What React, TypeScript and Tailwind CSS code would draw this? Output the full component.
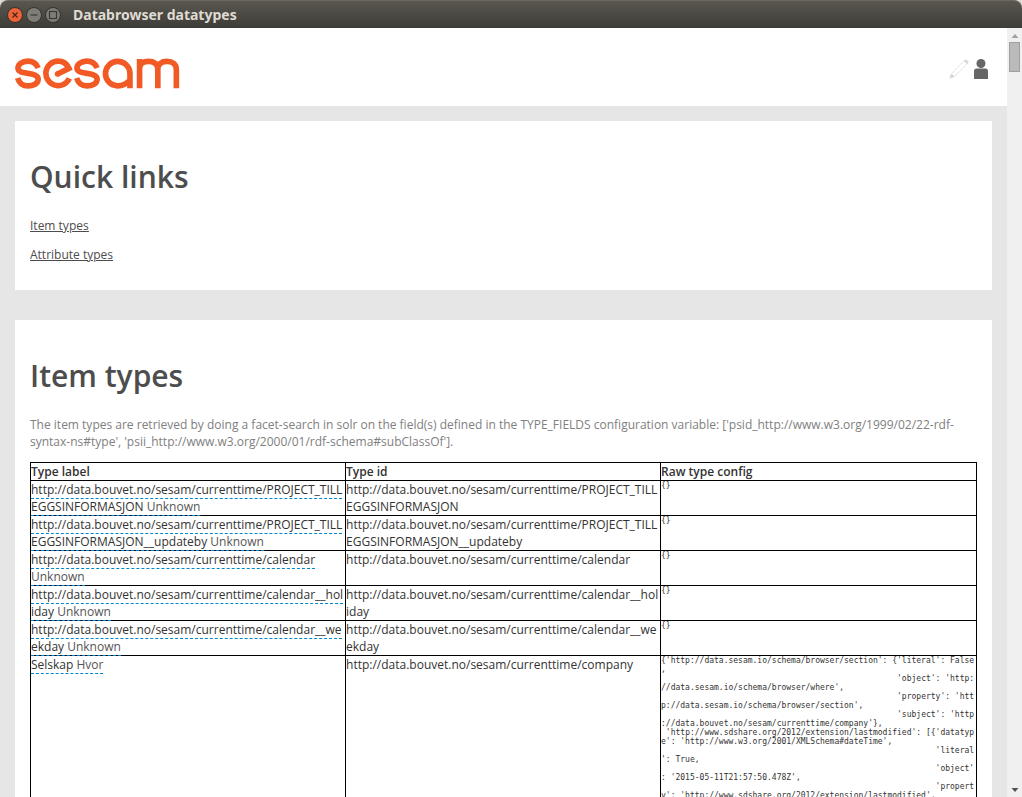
import React from "react";

type ItemType = { label: string; section: string; id: string; raw: string };

const base = "http://data.bouvet.no/sesam/currenttime/";

const pad = (n: number) => " ".repeat(n);

const companyConfig = [
  "{'http://data.sesam.io/schema/browser/section': {'literal': False,",
  pad(49) + "'object': 'http://data.sesam.io/schema/browser/where',",
  pad(49) + "'property': 'http://data.sesam.io/schema/browser/section',",
  pad(49) + "'subject': 'http://data.bouvet.no/sesam/currenttime/company'},",
  " 'http://www.sdshare.org/2012/extension/lastmodified': [{'datatype': 'http://www.w3.org/2001/XMLSchema#dateTime',",
  pad(57) + "'literal': True,",
  pad(57) + "'object': '2015-05-11T21:57:50.478Z',",
  pad(57) + "'property': 'http://www.sdshare.org/2012/extension/lastmodified',",
].join("\n");

const itemTypes: ItemType[] = [
  { label: base + "PROJECT_TILLEGGSINFORMASJON", section: "Unknown", id: base + "PROJECT_TILLEGGSINFORMASJON", raw: "{}" },
  { label: base + "PROJECT_TILLEGGSINFORMASJON__updateby", section: "Unknown", id: base + "PROJECT_TILLEGGSINFORMASJON__updateby", raw: "{}" },
  { label: base + "calendar", section: "Unknown", id: base + "calendar", raw: "{}" },
  { label: base + "calendar__holiday", section: "Unknown", id: base + "calendar__holiday", raw: "{}" },
  { label: base + "calendar__weekday", section: "Unknown", id: base + "calendar__weekday", raw: "{}" },
  { label: "Selskap", section: "Hvor", id: base + "company", raw: companyConfig },
];

function TitleBar() {
  return (
    <div className="bg-[#dfdbd2]">
      <div className="flex h-7 items-center gap-[3px] rounded-t-lg border-t border-[#6b6860] bg-linear-to-b from-[#59574f] to-[#3d3c37] pl-[7px]">
        <button aria-label="Close" className="size-4">
          <svg viewBox="0 0 16 16" className="size-4">
            <circle cx="8" cy="8" r="7.5" fill="#ec6239" stroke="#33322d" />
            <path d="M5.5 5.5l5 5m0-5l-5 5" stroke="#4a2416" strokeWidth="1.2" />
          </svg>
        </button>
        <button aria-label="Minimize" className="size-4">
          <svg viewBox="0 0 16 16" className="size-4">
            <circle cx="8" cy="8" r="7.5" fill="#7f7d75" stroke="#33322d" />
            <path d="M4.5 8h7" stroke="#3a3934" strokeWidth="1.2" />
          </svg>
        </button>
        <button aria-label="Maximize" className="size-4">
          <svg viewBox="0 0 16 16" className="size-4">
            <circle cx="8" cy="8" r="7.5" fill="#7f7d75" stroke="#33322d" />
            <rect x="4.5" y="4.500" width="7" height="7" fill="none" stroke="#3a3934" strokeWidth="1.2" />
          </svg>
        </button>
        <span className="pl-[9px] font-['Noto_Sans',sans-serif] text-sm font-bold text-[#dfdbd2]">Databrowser datatypes</span>
      </div>
    </div>
  );
}

function Logo() {
  const s = "M115 203C109 188 97 182 84 182C66 182 54 192 54 203C54 215 68 217 84 219C102 222 115 225 115 237C115 250 100 257 84 257C69 257 58 249 53 233";
  return (
    <svg role="img" aria-label="sesam" viewBox="45 173 498 93" className="h-[31px] w-[165px]" fill="none" stroke="#f15a24" strokeWidth="17">
      <path d={s} />
      <circle cx="173" cy="221" r="8" fill="#f15a24" stroke="none" />
      <path d="M172 222L208 204C202 190 189 182 175 182A37 37 0 1 0 209 234" />
      <path d={s} transform="translate(178 0)" />
      <path d="M392 264V219A37 37 0 1 0 355 257C368 257 380 253 388 242" />
      <path d="M421 264V176M421 205C421 190 432 183 448 183C464 183 476 190 476 206V264M476 206C476 190 488 183 504 183C520 183 532 191 532 208V264" />
    </svg>
  );
}

function Header() {
  return (
    <header className="flex h-[78px] items-center justify-between bg-white pr-[19px] pl-[15px]">
      <a href="#top" className="pt-3"><Logo /></a>
      <div className="flex items-center gap-[5px] pt-1">
        <button aria-label="Edit">
          <svg viewBox="0 0 20 20" className="size-5" fill="none" stroke="#d8d8d8">
            <path d="M1.5 18.5l1-4L15 2l3 3L5.500 17.500z" strokeDasharray="1.500 0.700" />
            <path d="M1 19l1.500-4 2.500 2.500zM15.500 1.500l2-.5 1.500 1.500-.5 2z" fill="#d8d8d8" />
          </svg>
        </button>
        <button aria-label="User">
          <svg viewBox="0 0 14 20" className="h-5 w-[14px]" fill="#666">
            <circle cx="7" cy="4.500" r="4.500" />
            <path d="M0 20v-7.500Q0 9.500 2.500 9.500h9Q14 9.500 14 12.500V20z" />
          </svg>
        </button>
      </div>
    </header>
  );
}

function Panel({ id, title, children }: { id: string; title: string; children: React.ReactNode }) {
  return (
    <section id={id} className="bg-white px-[15px] pt-9 pb-[27px]">
      <h1 className="mb-5 text-[30px] leading-10 font-semibold text-[#4d4d4d]">{title}</h1>
      {children}
    </section>
  );
}

function TypeTable() {
  return (
    <table className="w-full table-fixed border-collapse border border-black text-[#333]">
      <colgroup>
        <col className="w-[33.3%]" />
        <col className="w-[33.3%]" />
        <col />
      </colgroup>
      <thead>
        <tr>
          {["Type label", "Type id", "Raw type config"].map((h) => (
            <th key={h} className="border border-black p-0 text-left font-semibold">{h}</th>
          ))}
        </tr>
      </thead>
      <tbody>
        {itemTypes.map((t) => (
          <tr key={t.id} className="align-top">
            <td className="border border-black p-0 wrap-anywhere">
              <a href="#item-types" className="border-b border-dashed border-[#0088cc]">
                {t.label} <span className="text-[#555]">{t.section}</span>
              </a>
            </td>
            <td className="border border-black p-0 wrap-anywhere">{t.id}</td>
            <td className="border border-black p-0">
              <pre className="font-['DejaVu_Sans_Mono',monospace] text-[8px] leading-[9px] whitespace-pre-wrap [line-break:anywhere]">{t.raw}</pre>
            </td>
          </tr>
        ))}
      </tbody>
    </table>
  );
}

function ScrollBar() {
  return (
    <div aria-hidden="true" className="flex w-[15px] shrink-0 flex-col items-center justify-between bg-[#f0f0f0]">
      <div className="flex w-full flex-col items-center">
        <svg viewBox="0 0 8 14" className="h-[14px] w-2"><path d="M0.500 10L4 6l3.500 4z" fill="#a0a0a0" /></svg>
        <div className="h-[30px] w-[11px] border border-[#a0a0a0] bg-[#bababa]" />
      </div>
      <svg viewBox="0 0 8 14" className="h-[14px] w-2"><path d="M0.500 5L4 9l3.500-4z" fill="#505050" /></svg>
    </div>
  );
}

export default function App() {
  return (
    <div className="flex h-screen flex-col font-['Open_Sans',sans-serif] text-xs leading-[17px]">
      <TitleBar />
      <div className="flex min-h-0 flex-1">
        <div id="top" className="min-w-0 flex-1 overflow-y-auto bg-[#e6e6e6] [scrollbar-width:none]">
          <Header />
          <main className="flex flex-col gap-[30px] p-[15px]">
            <Panel id="quick-links" title="Quick links">
              <nav className="flex flex-col items-start gap-3 text-[#4d4d4d] underline">
                <a href="#item-types">Item types</a>
                <a href="#attribute-types">Attribute types</a>
              </nav>
            </Panel>
            <Panel id="item-types" title="Item types">
              <p className="mb-3 text-[#808080]">
                The item types are retrieved by doing a facet-search in solr on the field(s) defined in the TYPE_FIELDS configuration variable: ['psid_http://www.w3.org/1999/02/22-rdf-syntax-ns#type', 'psii_http://www.w3.org/2000/01/rdf-schema#subClassOf'].
              </p>
              <TypeTable />
            </Panel>
          </main>
        </div>
        <ScrollBar />
      </div>
    </div>
  );
}
